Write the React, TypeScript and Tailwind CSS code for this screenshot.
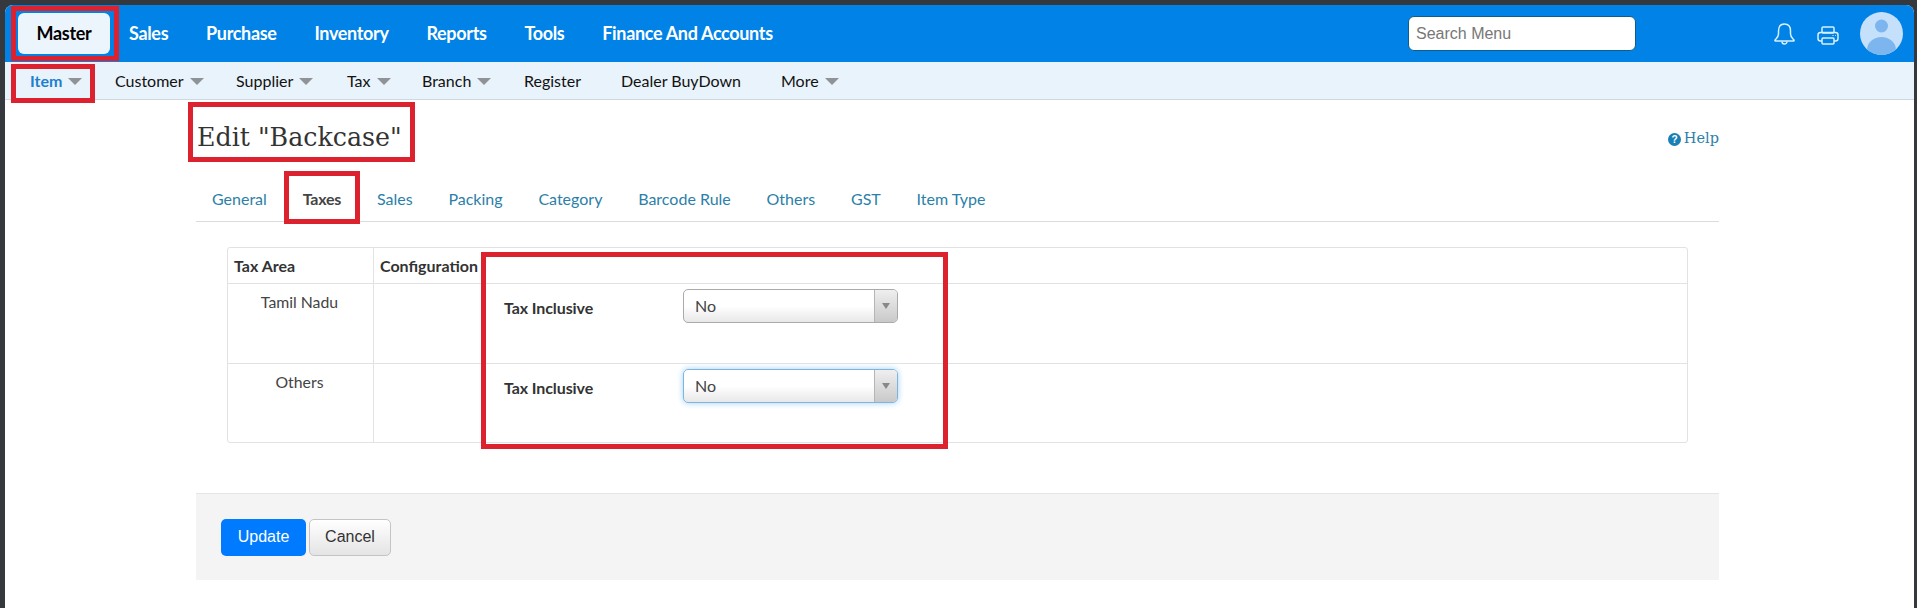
import React from "react";

const Caret = () => (
  <span className="ml-[6px] inline-block w-0 h-0 border-l-[7px] border-r-[7px] border-t-[7px] border-l-transparent border-r-transparent border-t-[#8f9296] translate-y-[1px]" />
);

const Red = ({ className }: { className: string }) => (
  <div className={"absolute border-[5px] border-[#dc222e] pointer-events-none " + className} />
);

const Select = ({ focus }: { focus?: boolean }) => (
  <div
    className={
      "w-[215px] h-[34px] flex rounded-[5px] border bg-gradient-to-b from-white via-white to-[#e8e8e8] text-[16px] text-[#444] " +
      (focus ? "border-[#7fb4dc] shadow-[0_0_6px_#9ed0f5]" : "border-[#aaaaaa]")
    }
  >
    <span className="flex-1 pl-[11px] leading-[32px]">No</span>
    <span className="w-[23px] border-l border-[#b5b5b5] bg-gradient-to-b from-[#efefef] to-[#c9c9c9] rounded-r-[4px] flex items-center justify-center">
      <span className="w-0 h-0 border-l-[4px] border-r-[4px] border-t-[6px] border-l-transparent border-r-transparent border-t-[#888]" />
    </span>
  </div>
);

const Row = ({ name, focus, h }: { name: string; focus?: boolean; h: string }) => (
  <div className={"flex border-t border-[#e2e2e2] " + h}>
    <div className="w-[146px] border-r border-[#e2e2e2] text-center pt-[8px] text-[15.8px] leading-[20px] text-[#444] pr-[2px]">{name}</div>
    <div className="flex-1 flex items-start pt-[5px] pl-[130px]">
      <span className="w-[179px] font-bold text-[16px] text-[#333] pt-[9px] leading-[20px] tracking-[-0.1px]">Tax Inclusive</span>
      <Select focus={focus} />
    </div>
  </div>
);

export default function App() {
  const top = ["Sales", "Purchase", "Inventory", "Reports", "Tools", "Finance And Accounts"];
  const tabs = ["General", "Taxes", "Sales", "Packing", "Category", "Barcode Rule", "Others", "GST", "Item Type"];
  return (
    <div className="relative w-[1917px] h-[608px] bg-[#35383d] pt-[5px] pl-[5px] pr-[3px] overflow-hidden font-['Lato',sans-serif]">
      <div className="h-[603px] bg-white rounded-t-[8px] overflow-hidden">
        <header className="h-[57px] bg-[#0082e6] flex items-center pl-[13px]">
          <div className="w-[92px] h-[41px] bg-[#ecf5fc] rounded-[6px] flex items-center justify-center font-bold text-[18px] tracking-[-0.3px] text-black">Master</div>
          <nav className="flex items-center ml-[19px] gap-[37.8px] text-white font-bold text-[18px] tracking-[-0.33px]">
            {top.map((t) => (
              <span key={t}>{t}</span>
            ))}
          </nav>
          <div className="ml-auto w-[228px] h-[35px] bg-white border border-[#0e5f87] rounded-[6px] flex items-center pl-[7px] text-[16px] text-[#777] font-['Liberation_Sans',sans-serif]">
            Search Menu
          </div>
          <svg className="ml-[138px]" width="21" height="22" viewBox="0 0 21 22" fill="none" stroke="#d8f1ff" strokeWidth="1.5" strokeLinejoin="round">
            <path d="M10.5 1C6.5 1 4.5 4 4.5 8V11C4.5 14 2.5 15.5 1 17Q.6 18 1.5 18H19.5Q20.4 18 20 17C18.5 15.5 16.5 14 16.5 11V8C16.5 4 14.5 1 10.5 1Z" />
            <path d="M8 18.5a2.5 2.5 0 0 0 5 0" />
          </svg>
          <svg className="ml-[22px] mt-[4px]" width="22" height="19" viewBox="0 0 22 19" fill="none" stroke="#d8f1ff" strokeWidth="1.5">
            <rect x="5" y="1" width="12" height="6" rx="1" />
            <rect x="1" y="6.5" width="20" height="8.5" rx="2.5" />
            <rect x="5" y="12" width="12" height="6" rx="1" fill="#0082e6" />
            <path d="M15.5 9.5h1M18 9.5h.8" strokeWidth="1" />
          </svg>
          <svg className="ml-[21px] mr-[11px]" width="43" height="43" viewBox="0 0 43 43">
            <defs>
              <clipPath id="c"><circle cx="21.5" cy="21.5" r="21.5" /></clipPath>
            </defs>
            <g clipPath="url(#c)">
              <rect width="43" height="43" fill="#c4e0fb" />
              <circle cx="21.5" cy="14" r="6.5" fill="#7db6ee" />
              <ellipse cx="21.5" cy="38" rx="14.5" ry="13" fill="#7db6ee" />
            </g>
          </svg>
        </header>
        <div className="h-[38px] bg-[#e9f3fb] border-b border-[#cfd8e0] flex items-center pl-[25px] text-[16px] text-[#111]">
          <span className="font-bold text-[#1c7fd0] flex items-center w-[85px]">Item<Caret /></span>
          <span className="flex items-center w-[121px]">Customer<Caret /></span>
          <span className="flex items-center w-[111px]">Supplier<Caret /></span>
          <span className="flex items-center w-[75px]">Tax<Caret /></span>
          <span className="flex items-center w-[102px]">Branch<Caret /></span>
          <span className="w-[97px]">Register</span>
          <span className="w-[160px]">Dealer BuyDown</span>
          <span className="flex items-center">More<Caret /></span>
        </div>
        <main className="w-[1523px] ml-[191px]">
          <div className="flex items-center justify-between h-[76px] pl-[1px] font-['DejaVu_Serif',serif]">
            <h1 className="text-[25.3px] text-[#333]">Edit "Backcase"</h1>
            <span className="flex items-center gap-[3px] text-[14.5px] text-[#2b7fa8] mt-[2px]">
              <svg width="13" height="13" viewBox="0 0 16 16">
                <circle cx="8" cy="8" r="8" fill="#1a7fb5" />
                <text x="8" y="12.5" textAnchor="middle" fontSize="12.5" fontWeight="bold" fill="#fff" fontFamily="Liberation Sans">?</text>
              </svg>
              Help
            </span>
          </div>
          <div className="h-[46px] border-b border-[#dcdcdc] flex items-center pl-[16px] gap-[35.8px] text-[16px] text-[#2b7fa8]">
            {tabs.map((t) => (
              <span key={t} className={t === "Taxes" ? "font-bold text-[#444] tracking-[-0.2px]" : ""}>{t}</span>
            ))}
          </div>
          <div className="mt-[25px] mx-[31px] h-[196px] border border-[#e2e2e2] rounded-[3px]">
            <div className="h-[35px] flex font-bold text-[16px] text-[#333] leading-[35px]">
              <div className="w-[146px] border-r border-[#e2e2e2] pl-[6px]">Tax Area</div>
              <div className="pl-[6px]">Configuration</div>
            </div>
            <Row name="Tamil Nadu" h="h-[80px]" />
            <Row name="Others" focus h="h-[79px]" />
          </div>
          <div className="mt-[50px] h-[87px] bg-[#f4f4f4] border-t border-[#e5e5e5] flex items-center pl-[25px] gap-[3px] font-['Liberation_Sans',sans-serif] text-[16px]">
            <span className="w-[85px] h-[37px] bg-[#007bff] text-white rounded-[5px] flex items-center justify-center">Update</span>
            <span className="w-[82px] h-[37px] border border-[#c4c4c4] rounded-[5px] bg-gradient-to-b from-white to-[#e4e4e4] text-[#333] flex items-center justify-center">Cancel</span>
          </div>
        </main>
      </div>
      <Red className="left-[11px] top-[6px] w-[108px] h-[55px]" />
      <Red className="left-[11px] top-[64px] w-[84px] h-[39px]" />
      <Red className="left-[188px] top-[102px] w-[227px] h-[60px]" />
      <Red className="left-[284px] top-[171px] w-[76px] h-[53px]" />
      <Red className="left-[481px] top-[252px] w-[467px] h-[197px]" />
    </div>
  );
}
